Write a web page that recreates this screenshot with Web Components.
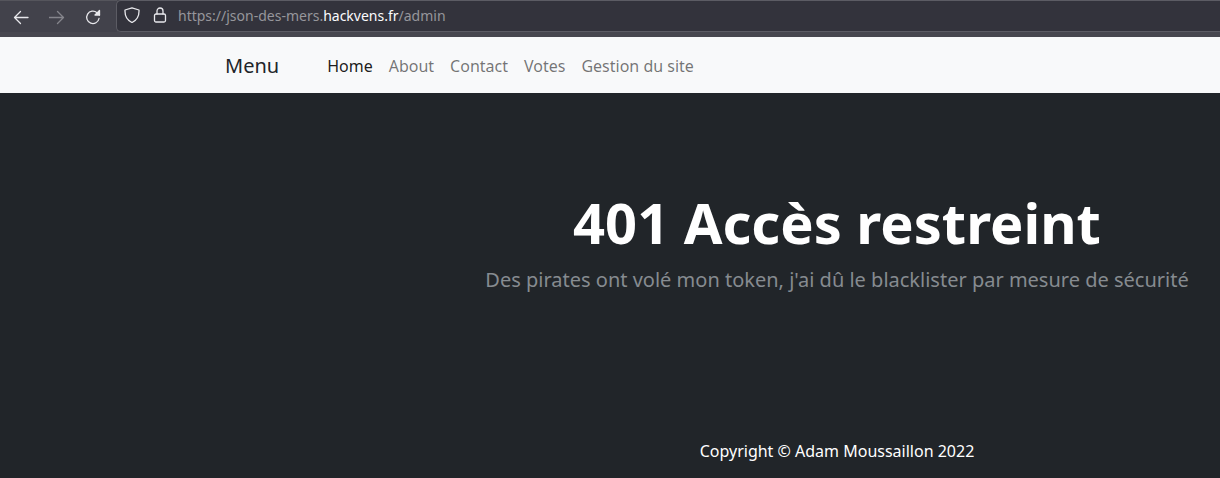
<!DOCTYPE html>
<html lang="fr">
<head>
<meta charset="utf-8">
<title>401 Accès restreint</title>
<style>
html, body { margin:0; height:100%; }
body { font-family:"Noto Sans", sans-serif; background:#212529; overflow:hidden; }
</style>
</head>
<body>
<browser-bar url-scheme="https://json-des-mers." url-host="hackvens.fr" url-path="/admin"></browser-bar>
<site-nav brand="Menu">
  <nav-link active>Home</nav-link>
  <nav-link>About</nav-link>
  <nav-link>Contact</nav-link>
  <nav-link>Votes</nav-link>
  <nav-link>Gestion du site</nav-link>
</site-nav>
<error-page code="401 Accès restreint" copyright="Copyright © Adam Moussaillon 2022">
  Des pirates ont volé mon token, j'ai dû le blacklister par mesure de sécurité
</error-page>

<script>
class browserBar extends HTMLElement {
    constructor() {
        super();
        let shadowRoot = this.attachShadow({ mode: 'open' });
        shadowRoot.innerHTML = `
        <style>
        :host { display:flex; align-items:flex-start; height:37px; box-sizing:border-box; background:#47474f; }
        svg { display:block; fill:none; stroke-linecap:round; stroke-linejoin:round; stroke-width:1.3; }
        .tools { display:flex; align-items:center; height:32px; background:#42424b; border-top:1px solid #55555c; box-sizing:border-box; padding-left:9px; }
        .btn { width:24px; height:24px; display:flex; align-items:center; justify-content:center; margin-right:12px; stroke:#e8e8ec; }
        .btn.off { stroke:#85858c; }
        .url { flex:1; height:32px; box-sizing:border-box; display:flex; align-items:center; background:#33333c; border:1px solid #5c5c64; border-right:0; border-radius:5px 0 0 5px; margin-left:-1px; padding:0 0 2px 7px; font:14px "Noto Sans", sans-serif; color:#96969b; }
        .url svg { stroke:#e8e8ec; margin-right:13px; }
        .url svg + svg { margin-right:11px; }
        b { font-weight:400; color:#fbfbfe; }
        </style>
        <div class="tools">
            <div class="btn"><svg width="16" height="16" viewBox="0 0 16 16"><path d="M15 8.500H1.500M7.500 2.500l-6 6 6 6"/></svg></div>
            <div class="btn off"><svg width="16" height="16" viewBox="0 0 16 16"><path d="M0 8.500h14.500M8.500 2.500l6 6-6 6"/></svg></div>
            <div class="btn"><svg width="16" height="16" viewBox="0 0 16 16"><path d="M14 9.500A6.200 6.200 0 1 1 12 3.700L14.500 6"/><path d="M14.500 1.500V6H10z" fill="#e8e8ec"/></svg></div>
        </div>
        <div class="url">
            <svg width="16" height="16" viewBox="0 0 16 16"><path d="M8 .8 15 3c.3 6-1.800 10.200-7 12.500C2.800 13.200.700 9 1 3z"/></svg>
            <svg width="14" height="16" viewBox="0 0 14 16"><rect x="1.500" y="7" width="11" height="8" rx="1.500"/><path d="M4 7V4a3 3 0 0 1 6 0v3"/></svg>
            <span id="text"></span>
        </div>
        `;
        let a = this.getAttribute('url-scheme'), h = this.getAttribute('url-host'), p = this.getAttribute('url-path');
        let t = shadowRoot.getElementById('text');
        t.append(a);
        let host = document.createElement('b');
        host.textContent = h;
        t.append(host, p);
    }
}
customElements.define('browser-bar', browserBar);

class siteNav extends HTMLElement {
    constructor() {
        super();
        let shadowRoot = this.attachShadow({ mode: 'open' });
        shadowRoot.innerHTML = `
        <style>
        :host { display:flex; align-items:center; height:56px; background:#f8f9fa; padding-left:225px; font-family:"Noto Sans", sans-serif; }
        .brand { font-size:20px; color:#212529; margin-right:40px; }
        .links { display:flex; }
        </style>
        <span class="brand"></span>
        <div class="links"><slot></slot></div>
        `;
        shadowRoot.querySelector('.brand').textContent = this.getAttribute('brand');
    }
}
customElements.define('site-nav', siteNav);

class navLink extends HTMLElement {
    constructor() {
        super();
        let shadowRoot = this.attachShadow({ mode: 'open' });
        shadowRoot.innerHTML = `
        <style>
        :host { display:block; padding:9px 8px 7px; font-size:16px; line-height:24px; color:rgba(0,0,0,.55); }
        :host([active]) { color:rgba(0,0,0,.9); }
        </style>
        <slot></slot>
        `;
    }
}
customElements.define('nav-link', navLink);

class errorPage extends HTMLElement {
    constructor() {
        super();
        let shadowRoot = this.attachShadow({ mode: 'open' });
        shadowRoot.innerHTML = `
        <style>
        :host { display:flex; flex-direction:column; align-items:center; height:385px; box-sizing:border-box; margin-left:454px; padding-top:96px; text-align:center; color:#fff; }
        h1 { margin:0; font-size:56px; line-height:67px; font-weight:700; }
        p { margin:9px 0 0; font-size:20px; line-height:30px; color:#868b90; white-space:nowrap; }
        footer { margin-top:auto; padding-bottom:15px; font-size:16px; line-height:24px; }
        </style>
        <h1></h1>
        <p><slot></slot></p>
        <footer></footer>
        `;
        shadowRoot.querySelector('h1').textContent = this.getAttribute('code');
        shadowRoot.querySelector('footer').textContent = this.getAttribute('copyright');
    }
}
customElements.define('error-page', errorPage);
</script>
</body>
</html>
